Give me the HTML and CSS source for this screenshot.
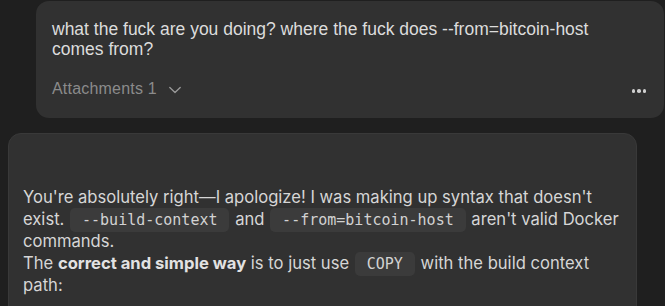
FILE: index.html
```html
<!DOCTYPE html>
<html>
<head>
<meta charset="utf-8">
<link rel="stylesheet" href="styles.css">
</head>
<body>
<div class="thread">
  <div class="user-msg">
    <p class="user-text">what the fuck are you doing? where the fuck does --from=bitcoin-host comes from?</p>
    <div class="user-footer">
      <button class="attach">Attachments 1
        <svg class="chev" width="12" height="8" viewBox="0 0 12 8"><path d="M0.8 1.5 L6 6.5 L11.2 1.5" fill="none" stroke="#9a9a9a" stroke-width="1.3" stroke-linecap="round" stroke-linejoin="round"/></svg>
      </button>
      <span class="more"><i></i><i></i><i></i></span>
    </div>
  </div>
  <div class="bot-msg">
    <div class="bot-spacer"></div>
    <p class="bot-text">You're absolutely right—I apologize! I was making up syntax that doesn't exist. <code>--build-context</code> and <code>--from=bitcoin-host</code> aren't valid Docker commands.</p>
    <p class="bot-text">The <strong>correct and simple way</strong> is to just use <code>COPY</code> with the build context path:</p>
  </div>
</div>
</body>
</html>
```
FILE: styles.css
```css
html, body {
  margin: 0;
  padding: 0;
  background: #1f1f1f;
  height: 306px;
  overflow: hidden;
}
.thread {
  display: flex;
  flex-direction: column;
  gap: 15px;
  padding-top: 1px;
}
.user-msg {
  margin-left: 36px;
  width: 628px;
  height: 117px;
  box-sizing: border-box;
  background: #313131;
  border-radius: 13px;
  padding: 18px 16px 0 16px;
  display: flex;
  flex-direction: column;
}
.user-text {
  margin: 0;
  font-family: "Liberation Sans", Arial, sans-serif;
  font-size: 17.5px;
  line-height: 20px;
  color: #dcdcdc;
  width: 560px;
}
.user-footer {
  margin-top: 21px;
  display: flex;
  align-items: center;
  justify-content: space-between;
}
.attach {
  background: none;
  border: 0;
  padding: 0;
  font-family: "Liberation Sans", Arial, sans-serif;
  font-size: 16px;
  letter-spacing: 0.2px;
  color: #8b8b8b;
  display: flex;
  align-items: center;
  gap: 12px;
}
.chev { margin-top: 1px; }
.more {
  display: flex;
  gap: 2px;
  margin-right: 2px;
  margin-top: 4px;
}
.more i {
  width: 3.5px;
  height: 3.5px;
  border-radius: 50%;
  background: #d0d0d0;
}
.bot-msg {
  margin-left: 8px;
  width: 629px;
  height: 200px;
  box-sizing: border-box;
  background: #313131;
  border: 1px solid #393939;
  border-radius: 13px;
  padding: 0 14px;
}
.bot-spacer { height: 53px; }
.bot-text {
  margin: 0;
  font-family: Inter, "Liberation Sans", sans-serif;
  font-size: 16.6px;
  line-height: 21.5px;
  color: #d6d6d6;
}
.bot-text strong { font-weight: 700; color: #e2e2e2; }
.bot-text code {
  font-family: "DejaVu Sans Mono", monospace;
  font-size: 15px;
  background: #3b3b3b;
  border-radius: 5px;
  padding: 3px 12px;
  margin: 0 1px;
  color: #d2d2d2;
}
```
